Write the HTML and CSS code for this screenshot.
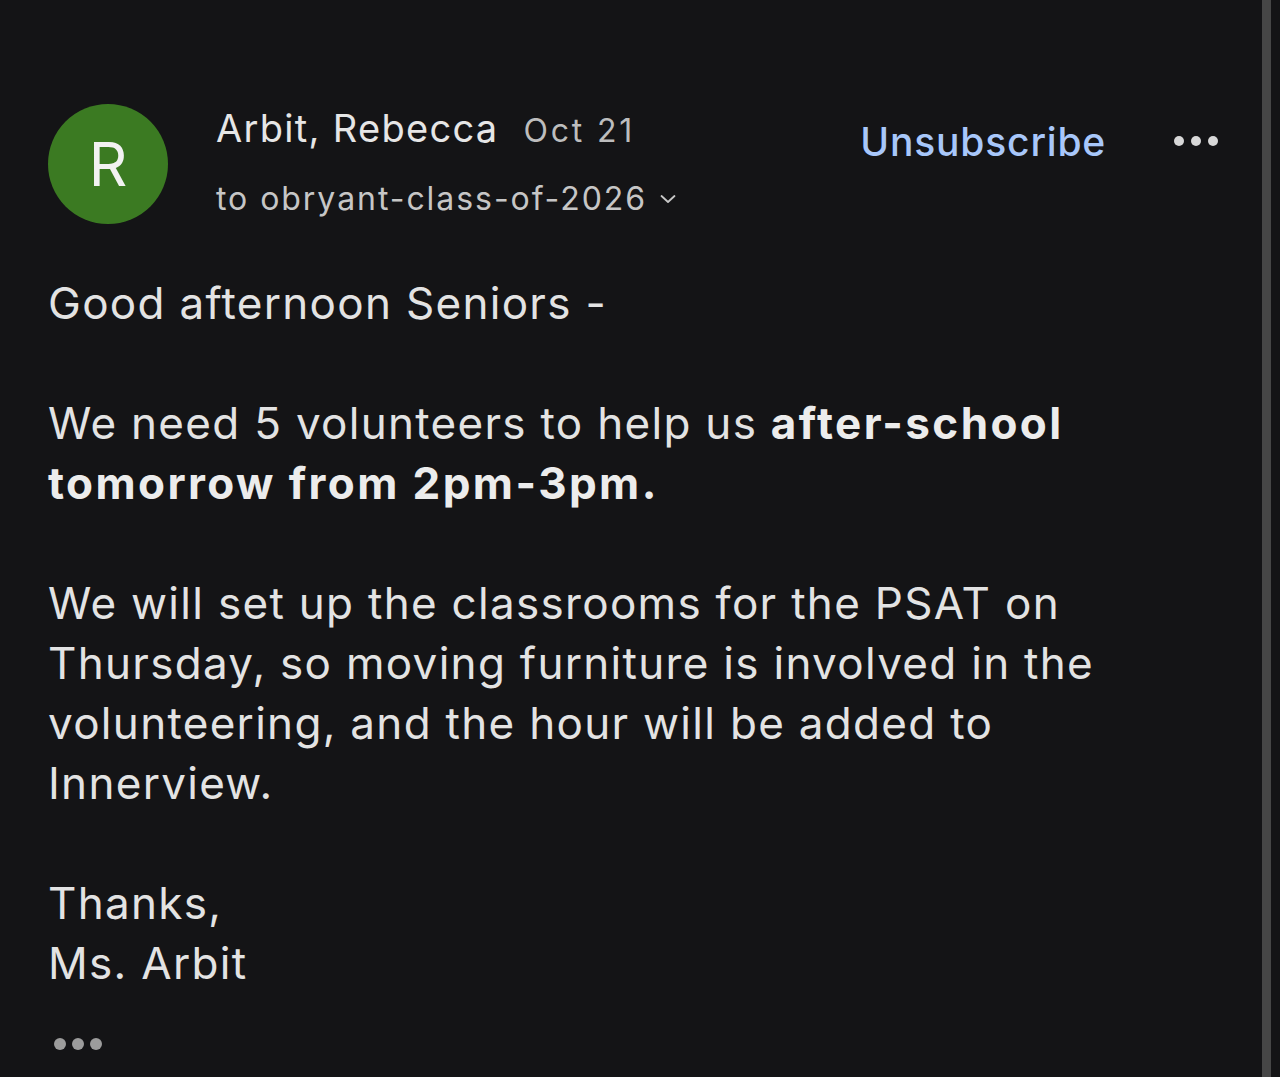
FILE: index.html
```html
<!DOCTYPE html>
<html>
<head>
<meta charset="utf-8">
<link rel="stylesheet" href="styles.css">
</head>
<body>
<div class="screen">
  <main class="mail">
    <header class="head">
      <div class="avatar">R</div>
      <div class="meta">
        <div class="from"><span class="name">Arbit, Rebecca</span><span class="date">Oct 21</span></div>
        <div class="to">to obryant-class-of-2026
          <svg class="chev" width="18" height="16" viewBox="0 0 18 16"><path d="M2.5 5 L9 11 L15.5 5" fill="none" stroke="#c8c8c8" stroke-width="1.8" stroke-linecap="round" stroke-linejoin="round"/></svg>
        </div>
      </div>
      <div class="unsub">Unsubscribe</div>
      <div class="more"><span></span><span></span><span></span></div>
    </header>
    <section class="body">
      <p>Good afternoon Seniors -</p>
      <p>We need 5 volunteers to help us <b>after-school tomorrow from 2pm-3pm.</b></p>
      <p>We will set up the classrooms for the PSAT on Thursday, so moving furniture is involved in the volunteering, and the hour will be added to Innerview.</p>
      <p>Thanks,<br>Ms. Arbit</p>
    </section>
    <div class="trim"><span></span><span></span><span></span></div>
  </main>
  <div class="scrollbar"></div>
  <div class="edge"></div>
</div>
</body>
</html>
```
FILE: styles.css
```css
html, body { margin: 0; padding: 0; }
body { background: #141416; font-family: Inter, "Noto Sans", sans-serif; color: #e3e3e3; }
.screen { display: flex; width: 1280px; height: 1077px; overflow: hidden; }
.mail { width: 1262px; padding: 104px 0 0 48px; box-sizing: border-box; }
.scrollbar { width: 9px; background: #464646; }
.edge { width: 9px; background: #141416; }
.head { display: flex; align-items: flex-start; }
.avatar { width: 120px; height: 120px; border-radius: 50%; background: #3b7a22; color: #f2f2f2; font-size: 60px; display: flex; align-items: center; justify-content: center; flex: none; }
.meta { margin-left: 48px; margin-top: 1px; }
.from { display: flex; align-items: baseline; }
.name { font-size: 38px; color: #e6e6e6; letter-spacing: 1.3px; }
.date { font-size: 32px; color: #bdbdbd; margin-left: 25px; letter-spacing: 2.8px; }
.to { font-size: 32px; color: #c6c6c6; margin-top: 28px; display: flex; align-items: center; letter-spacing: 1.95px; }
.chev { margin-left: 12px; }
.unsub { margin-left: auto; margin-top: 14px; font-size: 39px; font-weight: 500; color: #a8c7fa; letter-spacing: 0.8px; }
.more { display: flex; gap: 7px; margin: 32px 44px 0 68px; }
.more span { width: 10px; height: 10px; border-radius: 50%; background: #d8d8d8; }
.body { margin-top: 49px; font-size: 44px; line-height: 60px; width: 1100px; letter-spacing: 1.3px; }
.body p { margin: 0 0 60px; }
.body b { font-weight: 700; color: #ececec; letter-spacing: 2.4px; }
.trim { display: flex; gap: 6px; margin: -15px 0 0 6px; }
.trim span { width: 12px; height: 12px; border-radius: 50%; background: #9c9c9c; }
```
